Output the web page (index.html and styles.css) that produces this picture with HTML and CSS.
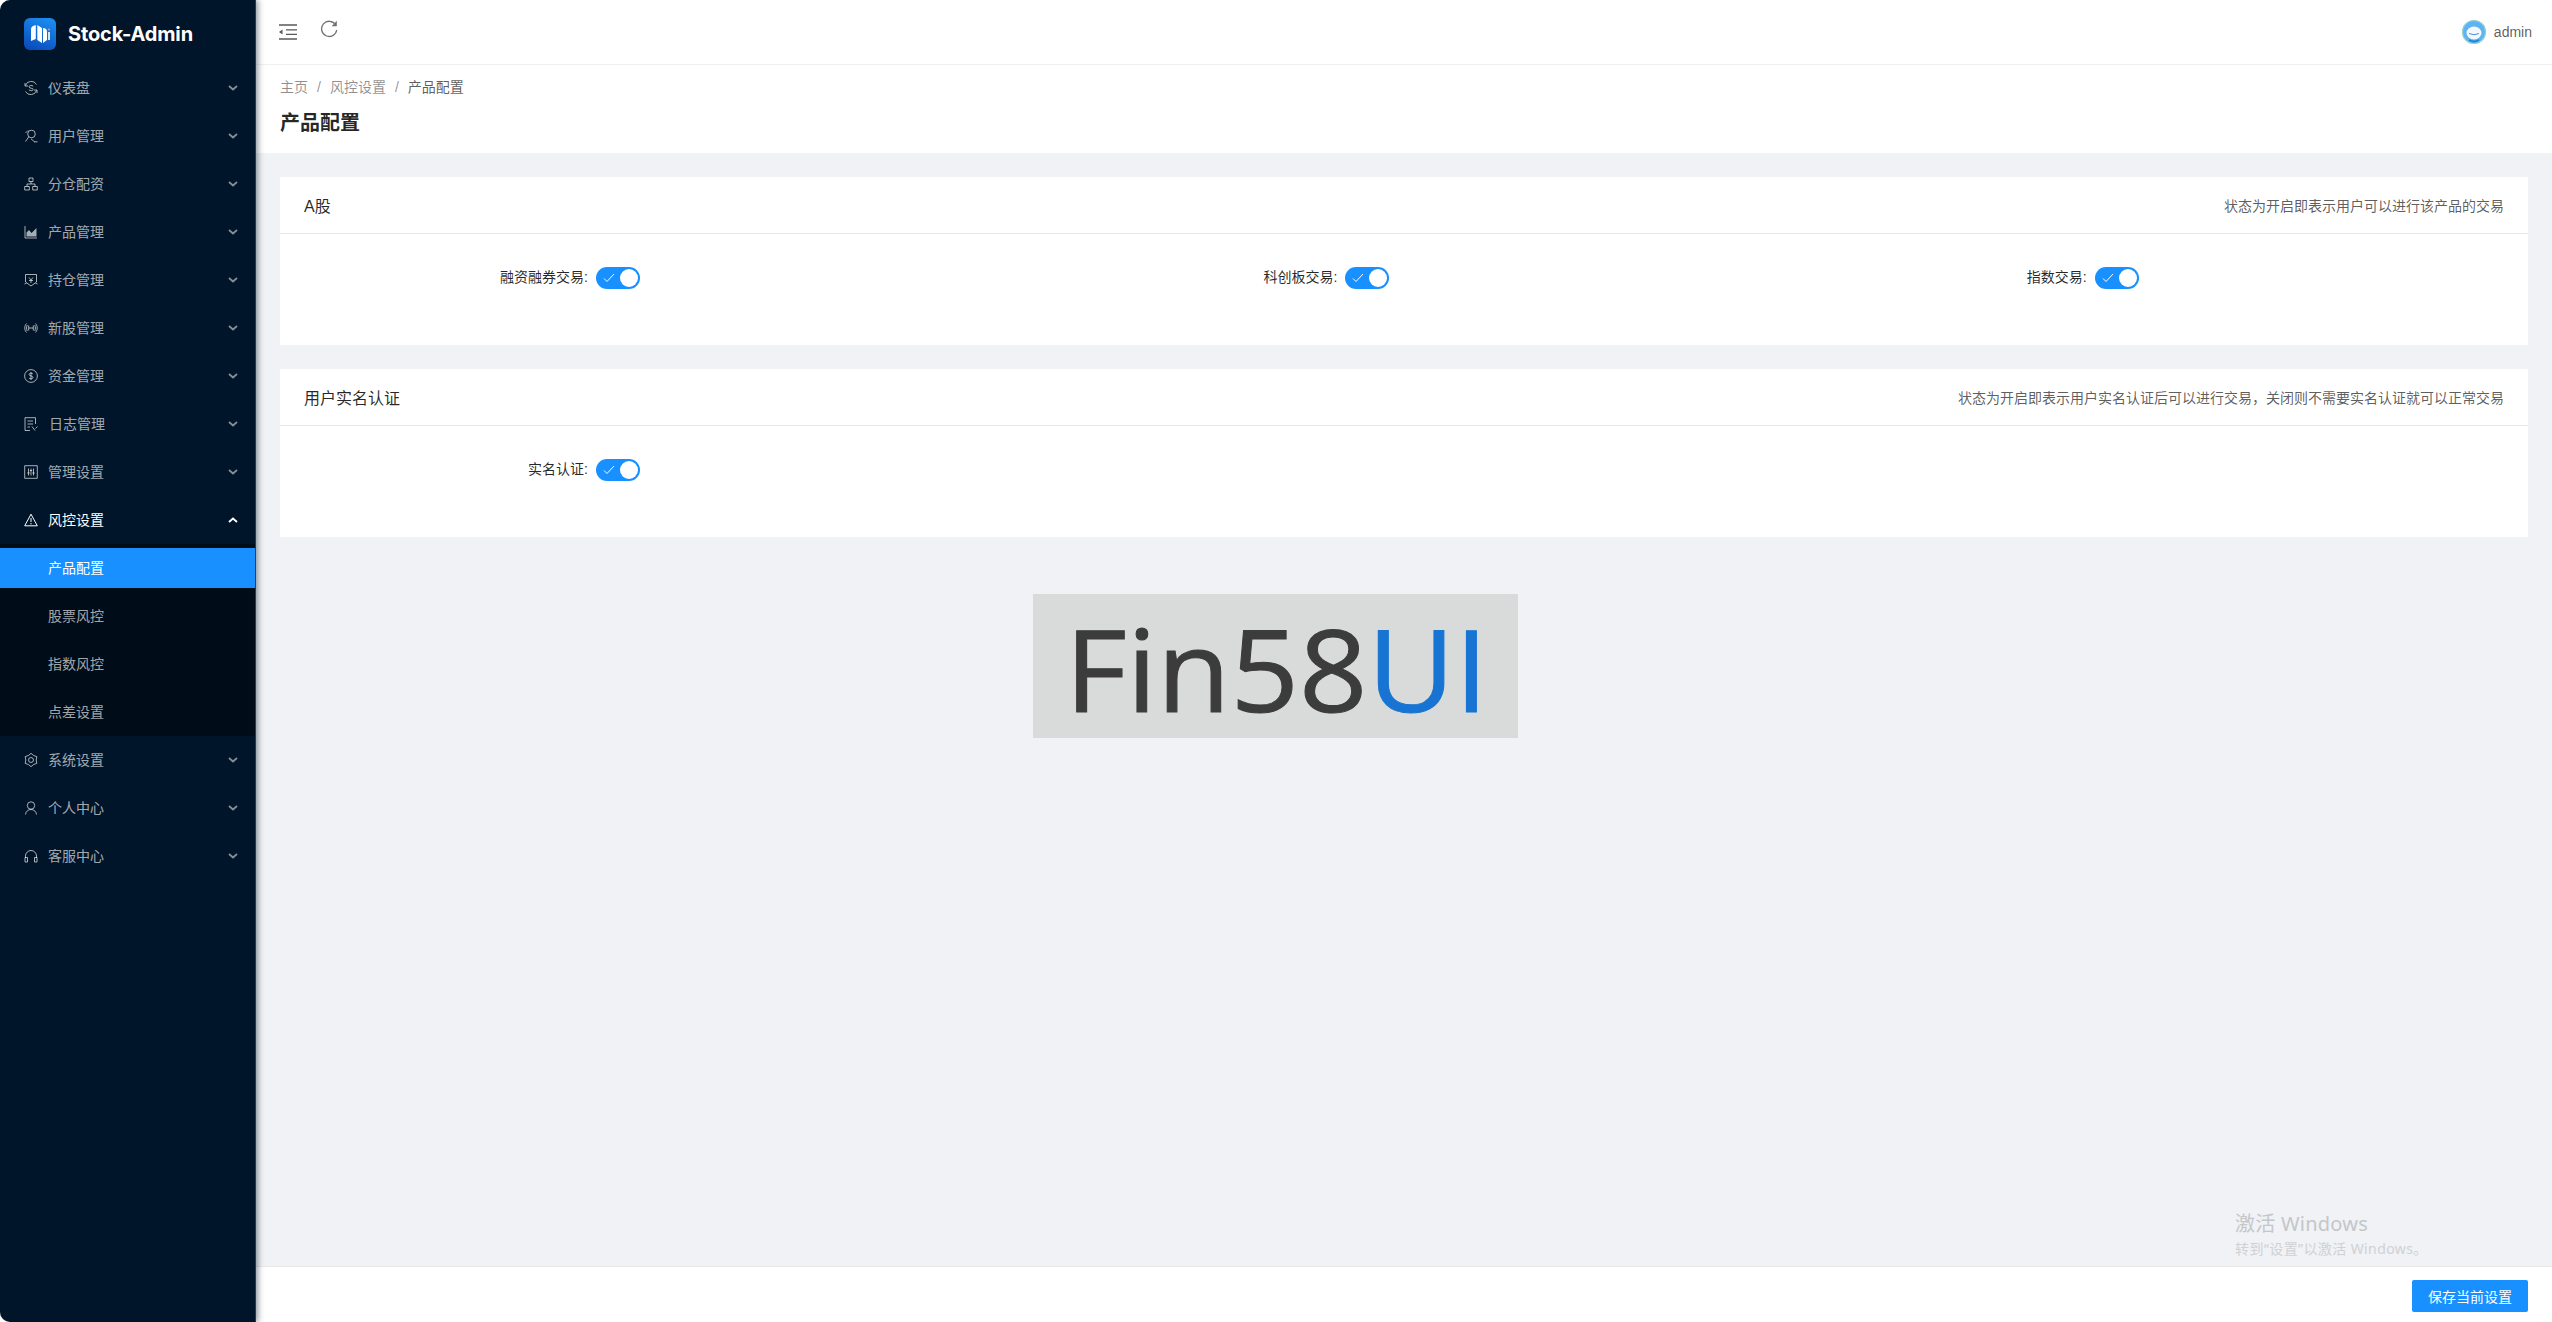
FILE: index.html
```html
<!DOCTYPE html>
<html lang="zh-CN">
<head>
<meta charset="utf-8">
<title>产品配置 - Stock-Admin</title>
<link rel="stylesheet" href="styles.css">
</head>
<body>
<div class="app">
  <aside class="sider">
    <div class="brand">
      <svg class="brand-logo" viewBox="0 0 32 32">
        <defs><linearGradient id="lg" x1="0.7" y1="0" x2="0.3" y2="1"><stop offset="0" stop-color="#1a8cf0"/><stop offset="1" stop-color="#0a4dbb"/></linearGradient></defs>
        <rect width="32" height="32" rx="6" fill="url(#lg)"/>
        <path d="M7 11q0-3 4.800-4V21L7 23zM13.300 7L18 10V25l-4.700-3zM19 10q4 .2 4 4v8l-4 3z" fill="#fff"/>
        <path d="M24 14h2v8h-2z" fill="#cfe6ff"/>
        <circle cx="25" cy="11.500" r="1.100" fill="#f08a8a"/>
      </svg>
      <span class="brand-name">Stock-Admin</span>
    </div>
    <nav class="menu">
      <div class="item"><svg class="ico" viewBox="0 0 14 14"><path d="M1.500 4.500A6 6 0 0 1 12.500 3.500M12.500 9.500A6 6 0 0 1 1.500 10.500M1 2v3h3M13 12V9h-3M9.200 5.200C8 4 5 4.300 5 5.800c0 2 4.200 .8 4.200 2.600 0 1.500-3 1.600-4.300 .5"/></svg><span class="label">仪表盘</span><svg class="arrow" viewBox="0 0 10 6"><path d="M1 1l4 3.500L9 1"/></svg></div>
      <div class="item"><svg class="ico" viewBox="0 0 14 14"><circle cx="7.500" cy="5" r="3.800"/><path d="M4.800 7.800L1.500 12.500M7 9.800l3.500 3M10 12.800h3.500M4 1.500L1.500 4"/></svg><span class="label">用户管理</span><svg class="arrow" viewBox="0 0 10 6"><path d="M1 1l4 3.500L9 1"/></svg></div>
      <div class="item"><svg class="ico" viewBox="0 0 14 14"><path d="M5 1h4v3.500H5zM.7 9.500h4.600V13H.7zM8.700 9.500h4.600V13H8.700zM7 4.500V7M3 9.500V7h8v2.500"/></svg><span class="label">分仓配资</span><svg class="arrow" viewBox="0 0 10 6"><path d="M1 1l4 3.500L9 1"/></svg></div>
      <div class="item"><svg class="ico" viewBox="0 0 14 14"><path d="M1 1v12h12"/><path class="fill" d="M2.500 11.500V7.500L5 5l2.500 3L10 5.500l2.500-2.500v8.500z"/></svg><span class="label">产品管理</span><svg class="arrow" viewBox="0 0 10 6"><path d="M1 1l4 3.500L9 1"/></svg></div>
      <div class="item"><svg class="ico" viewBox="0 0 14 14"><path d="M1.500 1.500h11V9L7 13 1.500 9zM0.500 11l2-.8M13.500 11l-2-.8"/><path d="M5 4.500L7 7l2-2.500M5 7.500h4M7 7v3"/></svg><span class="label">持仓管理</span><svg class="arrow" viewBox="0 0 10 6"><path d="M1 1l4 3.500L9 1"/></svg></div>
      <div class="item"><svg class="ico" viewBox="0 0 14 14"><path d="M2.500 2.500C.2 5 .2 9 2.500 11.500M11.500 2.500c2.300 2.500 2.300 6.500 0 9M4.700 4.500v5M9.300 4.500v5M4.700 7h4.600M3.300 4C2.300 5.800 2.300 8.200 3.300 10M10.700 4c1 1.800 1 4.200 0 6"/></svg><span class="label">新股管理</span><svg class="arrow" viewBox="0 0 10 6"><path d="M1 1l4 3.500L9 1"/></svg></div>
      <div class="item"><svg class="ico" viewBox="0 0 14 14"><circle cx="7" cy="7" r="6.400"/><path d="M8.900 5C8.200 3.900 5.100 3.800 5.100 5.500c0 2 3.900 .9 3.900 3 0 1.600-3.200 1.700-4.100 .4M7 3v8"/></svg><span class="label">资金管理</span><svg class="arrow" viewBox="0 0 10 6"><path d="M1 1l4 3.500L9 1"/></svg></div>
      <div class="item"><svg class="ico" viewBox="0 0 14 14"><path d="M6 13.500H1V.700h10.500V7M3.500 4h5.500M3.500 7h5.500M3.500 10h2.500M8 9.500l3 4M13.500 9.500l-2 2"/></svg><span class="label label-nudge">日志管理</span><svg class="arrow" viewBox="0 0 10 6"><path d="M1 1l4 3.500L9 1"/></svg></div>
      <div class="item"><svg class="ico" viewBox="0 0 14 14"><path d="M.7.700h12.600v12.600H.7zM4.500 3.500v7M9.500 3.500v7M7 3.500v7M3.300 8h2.400M5.800 5.500h2.400M8.300 8h2.400"/></svg><span class="label">管理设置</span><svg class="arrow" viewBox="0 0 10 6"><path d="M1 1l4 3.500L9 1"/></svg></div>
      <div class="item item-open"><svg class="ico" viewBox="0 0 14 14"><path d="M7 1.200L.7 12.800h12.600zM7 5v4M7 10v1.300"/></svg><span class="label">风控设置</span><svg class="arrow" viewBox="0 0 10 6"><path d="M1 5l4-3.500L9 5"/></svg></div>
      <div class="submenu">
        <div class="subitem subitem-active">产品配置</div>
        <div class="subitem">股票风控</div>
        <div class="subitem">指数风控</div>
        <div class="subitem">点差设置</div>
      </div>
      <div class="item"><svg class="ico" viewBox="0 0 14 14"><path d="M7 .3L9.600 2.500 12.800 3.650 12.200 7 12.800 10.350 9.600 11.500 7 13.700 4.400 11.500 1.200 10.350 1.800 7 1.200 3.650 4.400 2.500z"/><circle cx="7" cy="7" r="2.500"/></svg><span class="label">系统设置</span><svg class="arrow" viewBox="0 0 10 6"><path d="M1 1l4 3.500L9 1"/></svg></div>
      <div class="item"><svg class="ico" viewBox="0 0 14 14"><circle cx="7" cy="4.500" r="3.700"/><path d="M1.500 13.500c.3-3 2.500-5 5.500-5s5.200 2 5.500 5"/></svg><span class="label">个人中心</span><svg class="arrow" viewBox="0 0 10 6"><path d="M1 1l4 3.500L9 1"/></svg></div>
      <div class="item"><svg class="ico" viewBox="0 0 14 14"><path d="M1.500 9V7a5.500 5.500 0 0 1 11 0v2"/><path d="M1 8.500h2.500v4.500H1zM10.500 8.500H13v4.500h-2.500z"/></svg><span class="label">客服中心</span><svg class="arrow" viewBox="0 0 10 6"><path d="M1 1l4 3.500L9 1"/></svg></div>
    </nav>
  </aside>

  <div class="main">
    <header class="topbar">
      <svg class="tool tool-outdent" viewBox="0 0 18 16"><path d="M0 1h18M7 5.800h11M7 10.300h11M0 15h18"/><path class="fill" d="M0 8l3.500-2.600v5.200z"/></svg>
      <svg class="tool tool-reload" viewBox="0 0 18 18"><path d="M15.600 4.800A7.600 7.600 0 1 0 16.700 10"/><path class="fill" d="M16.800 .8v5.400h-5.200z"/></svg>
      <div class="account">
        <svg class="avatar" viewBox="0 0 24 24"><circle cx="12" cy="12" r="12" fill="#5db4f2"/><circle cx="12" cy="12" r="11.500" fill="none" stroke="#bfe7a8" stroke-width="1" opacity=".7"/><ellipse cx="12" cy="13" rx="7.500" ry="6.500" fill="#f3f8fd"/><path d="M7 13.500q5 2.500 10 0" fill="none" stroke="#4a8fd0" stroke-width="1"/><path d="M7 20q5 3 10 0" fill="none" stroke="#1f86dc" stroke-width="2"/></svg>
        <span class="account-name">admin</span>
      </div>
    </header>

    <div class="page-head">
      <div class="crumbs"><span>主页</span><span class="sep">/</span><span>风控设置</span><span class="sep">/</span><span class="crumb-last">产品配置</span></div>
      <h1 class="page-title">产品配置</h1>
    </div>

    <main class="content">
      <section class="card">
        <div class="card-head"><span class="card-title">A股</span><span class="card-hint">状态为开启即表示用户可以进行该产品的交易</span></div>
        <div class="card-body">
          <div class="field"><span class="field-label">融资融券交易:</span><span class="switch"><svg class="switch-check" viewBox="0 0 12 10"><path d="M1 5.500l3 3L11 1"/></svg><span class="knob"></span></span></div>
          <div class="field"><span class="field-label">科创板交易:</span><span class="switch"><svg class="switch-check" viewBox="0 0 12 10"><path d="M1 5.500l3 3L11 1"/></svg><span class="knob"></span></span></div>
          <div class="field"><span class="field-label">指数交易:</span><span class="switch"><svg class="switch-check" viewBox="0 0 12 10"><path d="M1 5.500l3 3L11 1"/></svg><span class="knob"></span></span></div>
        </div>
      </section>
      <section class="card">
        <div class="card-head"><span class="card-title">用户实名认证</span><span class="card-hint">状态为开启即表示用户实名认证后可以进行交易，关闭则不需要实名认证就可以正常交易</span></div>
        <div class="card-body">
          <div class="field"><span class="field-label">实名认证:</span><span class="switch"><svg class="switch-check" viewBox="0 0 12 10"><path d="M1 5.500l3 3L11 1"/></svg><span class="knob"></span></span></div>
        </div>
      </section>
    </main>

    <footer class="footbar"><button class="save" type="button">保存当前设置</button></footer>
  </div>

  <div class="stamp"><span class="stamp-text">Fin58<span class="stamp-blue">UI</span></span></div>
  <div class="activate"><div class="activate-title">激活 Windows</div><div class="activate-sub">转到“设置”以激活 Windows。</div></div>
</div>
</body>
</html>
```
FILE: styles.css
```css
* { box-sizing: border-box; }
html, body { margin: 0; height: 100%; background: #fff; }
body { font-family: "Liberation Sans", "Noto Sans CJK SC", sans-serif; font-size: 14px; overflow: hidden; }

.app { position: relative; display: flex; height: 1322px; border-radius: 10px; overflow: hidden; background: #f0f2f5; }

/* sidebar */
.sider { position: relative; z-index: 2; flex: 0 0 256px; background: #001529; box-shadow: 2px 0 6px rgba(0, 21, 41, .45); border-right: 1px solid #2b3c4e; }
.brand { display: flex; align-items: center; height: 68px; padding-left: 24px; }
.brand-logo { width: 32px; height: 32px; margin-right: 12px; }
.brand-name { font-family: Inter, "Liberation Sans", sans-serif; font-size: 20px; font-weight: 700; color: #fff; letter-spacing: -.15px; }
.menu { display: flex; flex-direction: column; gap: 8px; }
.item { display: flex; align-items: center; height: 40px; padding: 0 17px 0 24px; color: rgba(255, 255, 255, .65); line-height: 38px; }
.item-open { color: #fff; }
.ico { flex: none; width: 14px; height: 14px; margin-right: 10px; fill: none; stroke: currentColor; stroke-width: 1; }
.ico .fill { fill: currentColor; stroke: none; }
.label { flex: 1; }
.label-nudge { padding-left: 1px; }
.arrow { flex: none; width: 10px; height: 6px; fill: none; stroke: currentColor; stroke-width: 1.800; opacity: .8; }
.item-open .arrow { opacity: 1; }
.submenu { display: flex; flex-direction: column; gap: 8px; padding: 4px 0; margin: -4px 0; background: #000c17; }
.subitem { height: 40px; padding-left: 48px; line-height: 40px; color: rgba(255, 255, 255, .65); }
.subitem-active { background: #1890ff; color: #fff; }

/* main column */
.main { flex: 1; display: flex; flex-direction: column; min-width: 0; }
.topbar { display: flex; align-items: center; height: 65px; padding: 0 20px 0 23px; background: #fff; border-bottom: 1px solid #f0f0f0; }
.tool { flex: none; fill: none; stroke: #595959; stroke-width: 1.300; }
.tool .fill { fill: #595959; stroke: none; }
.tool-outdent { width: 18px; height: 16px; margin-right: 23px; }
.tool-reload { width: 18px; height: 18px; margin-top: -6px; stroke: #737373; }
.tool-reload .fill { fill: #737373; }
.account { display: flex; align-items: center; gap: 8px; margin-left: auto; }
.avatar { width: 24px; height: 24px; }
.account-name { color: rgba(0, 0, 0, .65); }

.page-head { height: 88px; padding-top: 11px; background: #fff; padding-left: 24px; }
.crumbs { display: flex; height: 22px; line-height: 22px; color: rgba(0, 0, 0, .45); }
.sep { margin: 0 9px; }
.crumb-last { color: rgba(0, 0, 0, .65); }
.page-title { margin: 11px 0 0; font-size: 20px; line-height: 28px; font-weight: 600; color: rgba(0, 0, 0, .85); }

.content { flex: 1; display: flex; flex-direction: column; gap: 24px; padding: 24px; }
.card { height: 168px; background: #fff; }
.card-head { display: flex; align-items: center; justify-content: space-between; height: 57px; padding: 0 24px; border-bottom: 1px solid #e8e8e8; }
.card-title { font-size: 16px; color: rgba(0, 0, 0, .85); }
.card-hint { color: rgba(0, 0, 0, .65); }
.card-body { display: grid; grid-template-columns: repeat(3, 1fr); padding-top: 33px; }
.field { display: flex; align-items: flex-start; height: 22px; }
.field-label { flex: 0 0 316px; padding-right: 8px; line-height: 20px; text-align: right; color: rgba(0, 0, 0, .85); }
.switch { position: relative; display: block; width: 44px; height: 22px; border-radius: 11px; background: #1890ff; }
.switch-check { position: absolute; left: 7px; top: 6px; width: 12px; height: 10px; fill: none; stroke: #fff; stroke-width: 1; }
.knob { position: absolute; right: 2px; top: 2px; width: 18px; height: 18px; border-radius: 50%; background: #fff; }

.footbar { display: flex; justify-content: flex-end; height: 56px; padding: 13px 24px 0; background: #fff; border-top: 1px solid #e8e8e8; }
.save { width: 116px; height: 32px; padding: 0; border: 0; border-radius: 2px; background: #1890ff; color: #fff; font: inherit; }

/* overlays */
.stamp { position: absolute; left: 1033px; top: 594px; display: flex; align-items: center; width: 485px; height: 144px; padding: 4px 0 0 32px; background: #d9dbda; }
.stamp-text { font-family: "Open Sans", sans-serif; font-size: 113px; line-height: 1; color: #3c3c3c; -webkit-text-stroke: 1px currentColor; transform: scaleX(1.06); transform-origin: left center; filter: blur(.5px); }
.stamp-blue { color: #1874d2; }
.activate { position: absolute; left: 2235px; top: 1210px; color: #c4c6ca; font-family: "Noto Sans", "Noto Sans CJK SC", sans-serif; }
.activate-title { font-size: 20px; line-height: 28px; letter-spacing: .25px; }
.activate-sub { font-size: 14px; line-height: 21px; letter-spacing: .4px; color: #cfd1d4; }
```
